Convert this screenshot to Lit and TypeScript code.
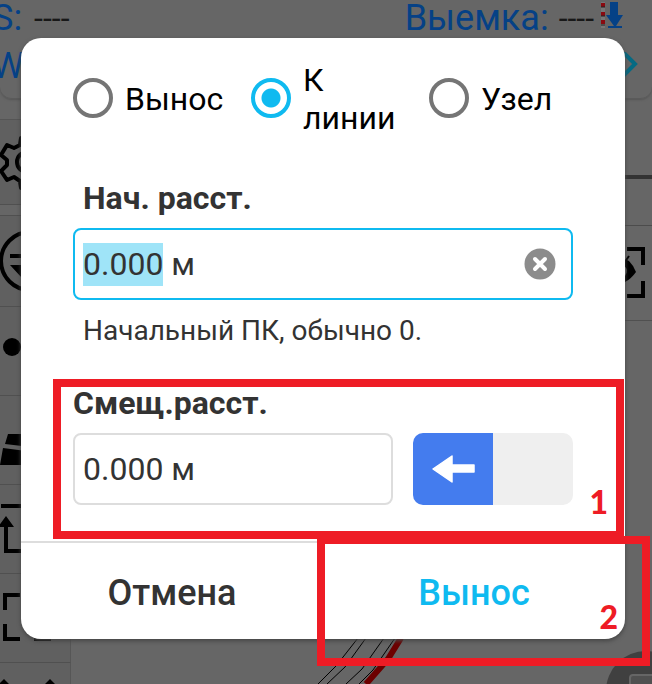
import { LitElement, html, svg, css } from "lit";
import { customElement, state, query } from "lit/decorators.js";

const settingsIcon = svg`
  <g fill="none" stroke="#000" stroke-width="4" stroke-linejoin="round">
    <path d="M21 18h10l2 7 6 3 7-2 5 9-5 5v6l5 5-5 9-7-2-6 3-2 7h-10l-1-7-6-4-7 3-6-9 6-6v-5l-6-5 6-10 7 3 6-3z"/>
    <circle cx="27" cy="42" r="10"/>
  </g>`;
const swapIcon = svg`
  <circle cx="30" cy="44" r="29" fill="none" stroke="#000" stroke-width="4"/>
  <path d="M10 37h40v4H10zM10 48h40v4H22v9z"/>`;
const pointIcon = svg`<circle cx="12" cy="40" r="9"/>`;
const roadIcon = svg`<path d="M8 38h44l4 16-51-6zM3 52l54 7 3 10H0z"/>`;
const axisIcon = svg`
  <path d="M1 19h40v4H1zM6 31l8 11H8v22h36v4H4V42h-6z"/>`;
const frameIcon = svg`
  <path d="M3 19h17v4H7v13H3zM34 19h17v17h-4V23H34zM3 50h4v13h13v4H3zM47 50h4v17H34v-4h13z"/>`;
const crossIcon = svg`<path d="M4 16l5 5-9 9-5-5zM50 16l5 5-9 9-5-5z"/>`;

const tools = [
  { name: "Обмен", icon: swapIcon },
  { name: "Точка", icon: pointIcon },
  { name: "Дорога", icon: roadIcon },
  { name: "Оси", icon: axisIcon },
  { name: "Рамка", icon: frameIcon },
  { name: "Разворот", icon: crossIcon },
];

const modes = [
  { id: "stake", label: "Вынос" },
  { id: "line", label: "К линии" },
  { id: "node", label: "Узел" },
];

@customElement("survey-screen")
export class SurveyScreen extends LitElement {
  static styles = css`
    :host {
      display: flex;
      flex-direction: column;
      background: #666;
      font-family: Roboto, sans-serif;
    }
    .status {
      flex: none;
      box-sizing: border-box;
      height: 99px;
      border-bottom: 1px solid #5a5a5a;
      border-radius: 0 0 12px 12px;
      box-shadow: 0 1px 2px #555;
      color: #054186;
      font-size: 36px;
      line-height: 36px;
      white-space: nowrap;
    }
    .row {
      display: flex;
      align-items: center;
      justify-content: space-between;
      height: 36px;
      margin-bottom: 12px;
    }
    .pair {
      display: flex;
      align-items: center;
      gap: 10px;
    }
    .left {
      gap: 12px;
      margin-left: -8px;
    }
    .right {
      margin-right: 28px;
    }
    .value {
      color: #181818;
      font-size: 32px;
    }
    .flag {
      align-self: flex-start;
      margin-left: -4px;
    }
    .next {
      margin-right: 12px;
    }
    .body {
      position: relative;
      flex: 1;
      min-height: 0;
      display: flex;
      justify-content: space-between;
      align-items: flex-start;
    }
    .tools,
    .side {
      display: flex;
      flex-direction: column;
      width: 71px;
    }
    .tools {
      padding-top: 20px;
    }
    .side {
      padding-top: 76px;
    }
    .side::before {
      content: "";
      height: 4px;
      background: #333;
      margin-bottom: 46px;
    }
    .tool {
      flex: none;
      box-sizing: border-box;
      height: 89px;
      padding: 0;
      border: 0;
      border-bottom: 1px solid #505050;
      border-right: 1px solid #565656;
      background: #606060;
      overflow: hidden;
    }
    .tool.solo {
      height: 86px;
      margin-bottom: 10px;
      border-top: 1px solid #555;
    }
    .tool.first {
      height: 92px;
      border-top: 1px solid #505050;
    }
    .tool.view {
      height: 96px;
      border-top: 1px solid #4c4c4c;
      border-right: 0;
      background: #666;
    }
    .tool svg {
      display: block;
    }
    .plan {
      position: absolute;
      left: 317px;
      bottom: 0;
    }
    .fab {
      position: absolute;
      right: -34px;
      bottom: -47px;
      width: 80px;
      height: 80px;
      padding: 0;
      border: 0;
      border-radius: 50%;
      background: #404040;
    }
  `;

  render() {
    return html`
      <header class="status">
        <div class="row">
          <span class="pair left"><span>S:</span><span class="value">----</span></span>
          <span class="pair right">
            <span>Выемка:</span><span class="value">----</span>
            <svg class="flag" width="24" height="28" viewBox="0 0 24 28" aria-hidden="true">
              <path d="M1 2h4v26H1z" fill="#777"/>
              <path d="M1 3h4v4H1zM1 12h4v4H1zM1 20h4v4H1z" fill="#8a0a10"/>
              <path d="M1 7h4M1 16h4M1 25h4" stroke="#222"/>
              <path d="M10 2h8v13h5l-7 11h6v2H8v-2h6L6 15h4z" fill="#054186"/>
            </svg>
          </span>
        </div>
        <div class="row">
          <span class="pair left">W:</span>
          <svg class="next" width="20" height="28" viewBox="0 0 20 28" aria-hidden="true">
            <path d="M3 0l12 12L3 24" fill="none" stroke="#056a83" stroke-width="4"/>
          </svg>
        </div>
      </header>
      <div class="body">
        <nav class="tools">
          <button class="tool solo" aria-label="Настройки">
            <svg width="70" height="84" aria-hidden="true">${settingsIcon}</svg>
          </button>
          ${tools.map(
            (t, i) => html`<button class="tool ${i ? "" : "first"}" aria-label=${t.name}>
              <svg width="70" height="88" aria-hidden="true">${t.icon}</svg>
            </button>`
          )}
        </nav>
        <svg class="plan" width="90" height="46" aria-hidden="true">
          <g fill="none" stroke="#000">
            <path d="M1 46l18-18 22-28M10 46l18-17 21-29M29 46l16-15 22-31M42 46l14-14 22-32"/>
          </g>
          <path d="M49 46l22-25L84 0" fill="none" stroke="#6c0000" stroke-width="6"/>
        </svg>
        <nav class="side">
          <button class="tool view" aria-label="Вид">
            <svg width="71" height="94" aria-hidden="true">
              <path d="M46 21h18v18h-4V25H46zM60 55h4v17H46v-4h14z"/>
              <path d="M25 46q14-16 23-11q5 5 7 11q-5 7-11 10q-9 2-19-10z"/>
              <path d="M41 40l7-10" stroke="#000" stroke-width="2"/>
              <path d="M42 40q5 4 1 10" fill="none" stroke="#666" stroke-width="2"/>
            </svg>
          </button>
        </nav>
        <button class="fab" aria-label="Меню">
          <svg width="80" height="80" aria-hidden="true">
            <rect x="24" y="24" width="36" height="34" rx="3" fill="#505050" stroke="#666" stroke-width="2"/>
          </svg>
        </button>
      </div>
    `;
  }
}

@customElement("app-root")
export class AppRoot extends LitElement {
  static styles = css`
    :host {
      position: relative;
      display: block;
      box-sizing: border-box;
      min-height: 100vh;
      padding: 38px 27px 45px 21px;
      overflow: hidden;
      background: #666;
      color: #333;
      font-family: Roboto, sans-serif;
      font-size: 32px;
      line-height: 38px;
    }
    .backdrop {
      position: absolute;
      inset: 0;
      overflow: hidden;
    }
    .dialog {
      position: relative;
      border-radius: 20px;
      background: #fff;
      box-shadow: 0 2px 4px #444;
    }
    .content {
      padding: 21px 52px 36px;
    }
    .modes {
      display: grid;
      grid-template-columns: repeat(3, minmax(0, 1fr));
      gap: 34px;
      margin: 0 0 42px;
      padding: 0;
      border: 0;
      color: #000;
    }
    .mode {
      display: flex;
      align-items: center;
      gap: 12px;
    }
    .radio {
      appearance: none;
      flex: none;
      box-sizing: border-box;
      width: 40px;
      height: 40px;
      margin: 0;
      border: 4px solid #757575;
      border-radius: 50%;
      outline: none;
    }
    .radio:checked {
      border-color: #0fbaf0;
      background: radial-gradient(circle, #0fbaf0 9px, #fff 10px);
    }
    .caption {
      padding-top: 2px;
    }
    .label {
      display: block;
      margin-bottom: 11px;
      font-weight: 700;
    }
    .indent {
      padding-left: 10px;
    }
    .field {
      display: flex;
      align-items: center;
      flex: 1;
      box-sizing: border-box;
      min-width: 0;
      height: 72px;
      border: 2px solid #ddd;
      border-radius: 8px;
    }
    .field.active {
      border-color: #0fbaf0;
    }
    .input {
      flex: 1;
      min-width: 0;
      height: 43px;
      padding: 0 8px;
      border: 0;
      outline: none;
      background: none;
      color: #333;
      font: inherit;
      line-height: 43px;
    }
    .input::selection {
      background: #9fe4f8;
      color: #333;
    }
    .clear {
      width: 32px;
      height: 32px;
      margin-right: 15px;
      padding: 0;
      border: 0;
      background: none;
    }
    .clear svg {
      display: block;
    }
    .hint {
      margin: 14px 0 36px;
      padding-left: 10px;
      font-size: 28px;
      line-height: 34px;
    }
    .offset,
    .action {
      position: relative;
    }
    .line {
      display: flex;
      gap: 20px;
    }
    .sides {
      display: flex;
      width: 160px;
      border-radius: 10px;
      overflow: hidden;
    }
    .direction {
      display: flex;
      align-items: center;
      justify-content: center;
      flex: 1;
      padding: 0;
      border: 0;
      background: #efefef;
    }
    .direction.on {
      background: #447cee;
    }
    .actions {
      display: flex;
      border-top: 2px solid #ddd;
    }
    .action {
      flex: 1;
      display: flex;
    }
    .button {
      flex: 1;
      height: 96px;
      padding: 4px 0 0;
      border: 0;
      background: none;
      color: #333;
      font: 500 36px/44px Roboto, sans-serif;
    }
    .button.primary {
      color: #0fbaf0;
    }
    .callout {
      position: absolute;
      display: flex;
      align-items: flex-end;
      justify-content: flex-end;
      box-sizing: border-box;
      border: 8px solid #ee1c25;
      color: #ee1c25;
      font: 900 32px/38px Lato, sans-serif;
      pointer-events: none;
    }
    .callout.one {
      inset: -5px -51px -34px -20px;
      padding: 10px 8px;
    }
    .callout.two {
      inset: -7px -25px -27px -6px;
      padding: 22px 24px;
    }
  `;

  @state() private mode = "line";
  @state() private side = "left";
  @query("#start") private start!: HTMLInputElement;

  firstUpdated() {
    this.start.focus();
    this.start.setSelectionRange(0, 5);
  }

  private clear() {
    this.start.value = "";
    this.start.focus();
  }

  render() {
    return html`
      <survey-screen class="backdrop"></survey-screen>
      <form class="dialog" role="dialog" @submit=${(e: Event) => e.preventDefault()}>
        <div class="content">
          <fieldset class="modes">
            ${modes.map(
              (m) => html`<label class="mode">
                <input
                  class="radio"
                  type="radio"
                  name="mode"
                  .checked=${this.mode === m.id}
                  @change=${() => (this.mode = m.id)}
                />
                <span class="caption">${m.label}</span>
              </label>`
            )}
          </fieldset>

          <label class="label indent" for="start">Нач. расст.</label>
          <div class="field active">
            <input class="input" id="start" type="text" value="0.000 м" />
            <button class="clear" type="button" aria-label="Очистить" @click=${this.clear}>
              <svg width="32" height="32" aria-hidden="true">
                <circle cx="16" cy="16" r="15.5" fill="#8c8c8c"/>
                <path d="M11 11l10 10M21 11L11 21" stroke="#fff" stroke-width="4" stroke-linecap="round"/>
              </svg>
            </button>
          </div>
          <p class="hint">Начальный ПК, обычно 0.</p>

          <section class="offset">
            <label class="label" for="offset">Смещ.расст.</label>
            <div class="line">
              <div class="field">
                <input class="input" id="offset" type="text" value="0.000 м" />
              </div>
              <div class="sides">
                <button
                  class="direction ${this.side === "left" ? "on" : ""}"
                  type="button"
                  aria-label="Влево"
                  @click=${() => (this.side = "left")}
                >
                  <svg width="44" height="30" viewBox="0 0 44 30" aria-hidden="true">
                    <path
                      d="M2 15L21 2v9h22v7H21v10z"
                      fill="#fff" stroke="#fff" stroke-width="1.5" stroke-linejoin="round"/>
                  </svg>
                </button>
                <button
                  class="direction ${this.side === "right" ? "on" : ""}"
                  type="button"
                  aria-label="Вправо"
                  @click=${() => (this.side = "right")}
                ></button>
              </div>
            </div>
            <div class="callout one">1</div>
          </section>
        </div>
        <div class="actions">
          <div class="action"><button class="button" type="button">Отмена</button></div>
          <div class="action">
            <button class="button primary" type="submit">Вынос</button>
            <div class="callout two">2</div>
          </div>
        </div>
      </form>
    `;
  }
}
